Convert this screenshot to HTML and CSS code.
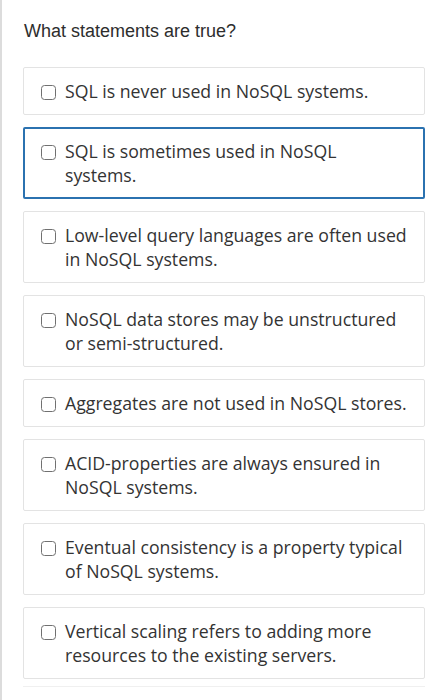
FILE: index.html
```html
<!DOCTYPE html>
<html>
<head>
<meta charset="utf-8">
<link rel="stylesheet" href="styles.css">
</head>
<body>
<div class="page">
  <h1 class="question">What statements are true?</h1>
  <div class="options">
    <label class="option"><span class="box"></span><span class="text">SQL is never used in NoSQL systems.</span></label>
    <label class="option focused"><span class="box"></span><span class="text">SQL is sometimes used in NoSQL systems.</span></label>
    <label class="option"><span class="box"></span><span class="text">Low-level query languages are often used in NoSQL systems.</span></label>
    <label class="option"><span class="box"></span><span class="text">NoSQL data stores may be unstructured or semi-structured.</span></label>
    <label class="option"><span class="box"></span><span class="text">Aggregates are not used in NoSQL stores.</span></label>
    <label class="option"><span class="box"></span><span class="text">ACID-properties are always ensured in NoSQL systems.</span></label>
    <label class="option"><span class="box"></span><span class="text">Eventual consistency is a property typical of NoSQL systems.</span></label>
    <label class="option"><span class="box"></span><span class="text">Vertical scaling refers to adding more resources to the existing servers.</span></label>
  </div>
  <div class="divider"></div>
</div>
</body>
</html>
```
FILE: styles.css
```css
html, body {
  margin: 0;
  padding: 0;
  background: #fff;
}
.page {
  min-height: 700px;
  border-left: 2px solid #dcdcdc;
  padding: 19px 22px 0 21px;
  box-sizing: border-box;
}
.question {
  margin: 0 0 24px 1px;
  font-family: "Liberation Sans", Arial, sans-serif;
  font-weight: normal;
  font-size: 18px;
  line-height: 24px;
  color: #2d2d2d;
}
.options {
  display: flex;
  flex-direction: column;
  gap: 12px;
}
.option {
  display: flex;
  align-items: flex-start;
  border: 1px solid #e3e3e3;
  border-radius: 2px;
  padding: 11px 13px 11px 17px;
  font-family: "Open Sans", sans-serif;
  font-size: 17.7px;
  line-height: 24px;
  color: #333;
}
.option.focused {
  border: 2px solid #2b72b0;
  padding: 10px 12px 10px 16px;
}
.text {
  flex: 1;
  min-width: 0;
}
.box {
  flex: none;
  width: 13px;
  height: 13px;
  border: 1.5px solid #707070;
  border-radius: 3.5px;
  margin: 6px 9px 0 0;
}
.divider {
  margin-top: 7px;
  border-top: 1px solid #f0f0f0;
}
```
